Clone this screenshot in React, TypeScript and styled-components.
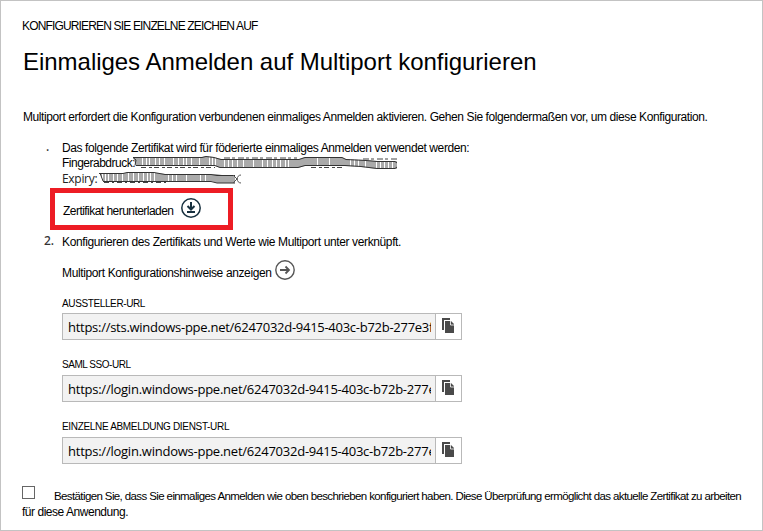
import React from 'react';
import styled, { createGlobalStyle } from 'styled-components';

const GlobalStyle = createGlobalStyle`
  * { box-sizing: border-box; }
  body { margin: 0; background: #fff; }
`;

const sans = '"Liberation Sans", Arial, sans-serif';
const humanist = '"Open Sans", "Noto Sans", sans-serif';

const Page = styled.main`
  width: 763px;
  height: 531px;
  padding: 17px 20px 0 21px;
  border: 1px solid #c3c3c3;
  overflow: hidden;
  color: #000;
  font: 12px/16px ${sans};
`;

const Eyebrow = styled.div`
  letter-spacing: -0.84px;
  white-space: nowrap;
`;

const Title = styled.h1`
  margin: 14px 0 0 1px;
  font: 400 24px/28px ${sans};
  letter-spacing: -0.03px;
  white-space: nowrap;
`;

const Intro = styled.p`
  margin: 33px 0 0 1px;
  letter-spacing: -0.41px;
  white-space: nowrap;
`;

const Steps = styled.ol`
  margin: 15px 0 0;
  padding: 0;
  list-style: none;
`;

const Step = styled.li<{ $gap?: number }>`
  display: grid;
  grid-template-columns: 40px 1fr;
  margin-top: ${p => p.$gap ?? 0}px;
`;

const Marker = styled.span<{ $indent: number }>`
  padding-left: ${p => p.$indent}px;
  font: 500 12px/14px "Noto Sans", sans-serif;
  color: #333;
`;

const Line = styled.div<{ $spacing: number; $height?: number }>`
  height: ${p => p.$height ?? 15}px;
  line-height: 16px;
  letter-spacing: ${p => p.$spacing}px;
  white-space: nowrap;
`;

const Thumbprint = styled(Line)`
  display: flex;
`;

const Expiry = styled(Thumbprint)`
  line-height: 18px;
  font-family: ${humanist};
  color: #222;
`;

const Highlight = styled.div`
  display: flex;
  width: 183px;
  height: 42px;
  margin: 3px 0 0 -12px;
  padding: 10px 0 0 8px;
  border: 5px solid #ed1c24;
  gap: 7px;
`;

const DownloadLabel = styled.span`
  letter-spacing: -0.54px;
  white-space: nowrap;
`;

const HintRow = styled.div`
  display: flex;
  margin-top: 15px;
  gap: 2px;
  letter-spacing: -0.37px;
`;

const CircleIcon = styled.svg<{ $lift: number }>`
  flex: none;
  width: 22px;
  height: 22px;
  margin-top: -${p => p.$lift}px;
`;

const Scribble = styled.svg<{ $shift: number; $drop: number }>`
  flex: none;
  overflow: visible;
  margin: ${p => p.$drop}px 0 0 ${p => p.$shift}px;
`;

const Field = styled.div<{ $top: number }>`
  margin: ${p => p.$top}px 0 0 40px;
`;

const FieldLabel = styled.label<{ $spacing: number; $height: number }>`
  display: block;
  height: ${p => p.$height}px;
  font: 10px/14px ${sans};
  letter-spacing: ${p => p.$spacing}px;
`;

const InputGroup = styled.div`
  display: flex;
  width: 400px;
  height: 27px;
  border: 1px solid #b9b9b9;
`;

const UrlBox = styled.div`
  width: 373px;
  padding: 0 4px 0 5px;
  background: #f2f2f2;
  border-right: 1px solid #b9b9b9;
`;

const UrlText = styled.div<{ $spacing: number }>`
  overflow: hidden;
  white-space: nowrap;
  font: 13px/27px ${humanist};
  letter-spacing: ${p => p.$spacing}px;
  height: 25px;
`;

const CopyButton = styled.button`
  flex: 1;
  display: flex;
  padding: 4px 0 0 6px;
  border: 0;
  background: #fff;
`;

const Confirm = styled.div`
  display: flex;
  align-items: flex-start;
  margin-top: 22px;
  gap: 19px;
`;

const Checkbox = styled.span`
  width: 13px;
  height: 13px;
  border: 1px solid #666;
`;

const ConfirmText = styled.span`
  padding-top: 2px;
  font-size: 11.5px;
  letter-spacing: -0.61px;
  white-space: nowrap;
`;

const ConfirmRest = styled.div`
  letter-spacing: -0.47px;
`;

const longOutline = 'M2 1H71L75 0L83 1L90 3H168L174 1H211L215 3L235 4L246 5H266V13H246L230 11L214 10H174L167 12H89L84 10H5Z';
const longStripes = [11, 15, 18, 24, 28, 33, 42, 47, 52, 55, 60, 68, 78, 81, 84, 93, 97, 101, 106, 112, 122, 131, 136, 141, 145, 149, 154, 157, 186, 198, 219, 223, 227, 234, 245, 249, 253, 257, 261];

const LongScribble = () => (
  <Scribble width="268" height="14" viewBox="0 0 268 14" $shift={-4} $drop={1} aria-hidden="true">
    <defs>
      <clipPath id="long"><path d={longOutline} /></clipPath>
    </defs>
    <path d="M10 11.500H84M180 11.500H212" stroke="#444" strokeWidth="1.2" strokeDasharray="5 3 3 2" />
    <path d="M93 2H166M232 3H266" stroke="#444" strokeDasharray="6 2 3 3" />
    <path d={longOutline} fill="#aaa" />
    <g clipPath="url(#long)" stroke="#fff">
      {longStripes.map(x => <path key={x} d={`M${x + 0.5} 0V14`} />)}
    </g>
    <path d="M2 1.500H71L75 .5L83 1.500L90 3.500H168L174 1.500H211L215 3.500L235 4.500L246 5.500H264L266 7M5 9.500H84L89 11.500H167L174 9.500H214L230 10.500L246 12.500H264L266 11M2 1.500L5 4L4 9.500" fill="none" stroke="#333" />
  </Scribble>
);

const ShortScribble = () => (
  <Scribble width="142" height="13" viewBox="0 0 142 13" $shift={2} $drop={2} aria-hidden="true">
    <path d="M5 10.500H68" stroke="#444" strokeWidth="1.2" strokeDasharray="5 3 2 3" />
    <path d="M1 1H60L66 2H118L123 3H136V11H118L112 9H4Z" fill="#aaa" />
    <path d="M3.500 1V9M6.500 1V9M9.500 1V9M14.500 1V9M18.500 1V9M23.500 1V9M29.500 1V9M34.500 1V9M39.500 1V9M44.500 1V9M48.500 1V9M51.500 1V9M55.500 1V9M69.500 2V9M73.500 2V9M77.500 2V9M87.500 2V9M101.500 2V9M106.500 2V9" stroke="#fff" />
    <path d="M0 1.500H24L28 .5L55 .5L66 2.500H112L118 3.500H136M4 9.500H112L118 11H136M1 1L4 9" fill="none" stroke="#333" />
    <path d="M134 3L138 7L134 11M142 3C137 3 137 11 142 11" fill="none" stroke="#555" />
  </Scribble>
);

const CopyIcon = () => (
  <svg width="14" height="17" viewBox="0 0 14 17" aria-hidden="true">
    <path d="M0 0H8V2H2V12H0Z" fill="#4a4a4a" />
    <path d="M3 3H9L12 6V15H3Z" fill="#4a4a4a" />
    <path d="M8.500 3V7H12" fill="none" stroke="#fff" strokeWidth=".8" />
  </svg>
);

const fields = [
  { label: 'AUSSTELLER-URL', spacing: -0.38, top: 16, labelHeight: 16, url: 'https://sts.windows-ppe.net/6247032d-9415-403c-b72b-277e3f', urlSpacing: -0.27 },
  { label: 'SAML SSO-URL', spacing: -0.46, top: 18, labelHeight: 17, url: 'https://login.windows-ppe.net/6247032d-9415-403c-b72b-277e3f', urlSpacing: -0.24 },
  { label: 'EINZELNE ABMELDUNG DIENST-URL', spacing: -0.33, top: 18, labelHeight: 17, url: 'https://login.windows-ppe.net/6247032d-9415-403c-b72b-277e3f', urlSpacing: -0.24 },
];

export default function App() {
  return (
    <>
      <GlobalStyle />
      <Page>
        <Eyebrow>KONFIGURIEREN SIE EINZELNE ZEICHEN AUF</Eyebrow>
        <Title>Einmaliges Anmelden auf Multiport konfigurieren</Title>
        <Intro>
          Multiport erfordert die Konfiguration verbundenen einmaliges Anmelden aktivieren. Gehen Sie folgendermaßen vor, um diese Konfiguration.
        </Intro>
        <Steps>
          <Step>
            <Marker $indent={24}>.</Marker>
            <div>
              <Line $spacing={-0.39}>Das folgende Zertifikat wird für föderierte einmaliges Anmelden verwendet werden:</Line>
              <Thumbprint $spacing={-0.5}>Fingerabdruck:<LongScribble /></Thumbprint>
              <Expiry $spacing={-0.3}>Expiry:<ShortScribble /></Expiry>
              <Highlight>
                <DownloadLabel>Zertifikat herunterladen</DownloadLabel>
                <CircleIcon $lift={6} viewBox="0 0 22 22" fill="none" stroke="#17303f" aria-hidden="true">
                  <circle cx="11" cy="11" r="9.2" strokeWidth="1.5" />
                  <path d="M11 5V12.500M7.500 9L11 12.500L14.500 9M7 15H15" strokeWidth="2" />
                </CircleIcon>
              </Highlight>
            </div>
          </Step>
          <Step $gap={4}>
            <Marker $indent={22}>2.</Marker>
            <div>
              <Line $spacing={-0.375} $height={16}>Konfigurieren des Zertifikats und Werte wie Multiport unter verknüpft.</Line>
              <HintRow>
                Multiport Konfigurationshinweise anzeigen
                <CircleIcon $lift={6} viewBox="0 0 22 22" fill="none" stroke="#555" aria-hidden="true">
                  <circle cx="11" cy="11" r="9.2" strokeWidth="1.4" />
                  <path d="M6 11H15M11.500 7.500L15 11L11.500 14.500" strokeWidth="1.8" />
                </CircleIcon>
              </HintRow>
            </div>
          </Step>
        </Steps>
        {fields.map(f => (
          <Field key={f.label} $top={f.top}>
            <FieldLabel $spacing={f.spacing} $height={f.labelHeight}>{f.label}</FieldLabel>
            <InputGroup>
              <UrlBox><UrlText $spacing={f.urlSpacing}>{f.url}</UrlText></UrlBox>
              <CopyButton aria-label="Kopieren"><CopyIcon /></CopyButton>
            </InputGroup>
          </Field>
        ))}
        <Confirm>
          <Checkbox />
          <ConfirmText>
            Bestätigen Sie, dass Sie einmaliges Anmelden wie oben beschrieben konfiguriert haben. Diese Überprüfung ermöglicht das aktuelle Zertifikat zu arbeiten
          </ConfirmText>
        </Confirm>
        <ConfirmRest>für diese Anwendung.</ConfirmRest>
      </Page>
    </>
  );
}
